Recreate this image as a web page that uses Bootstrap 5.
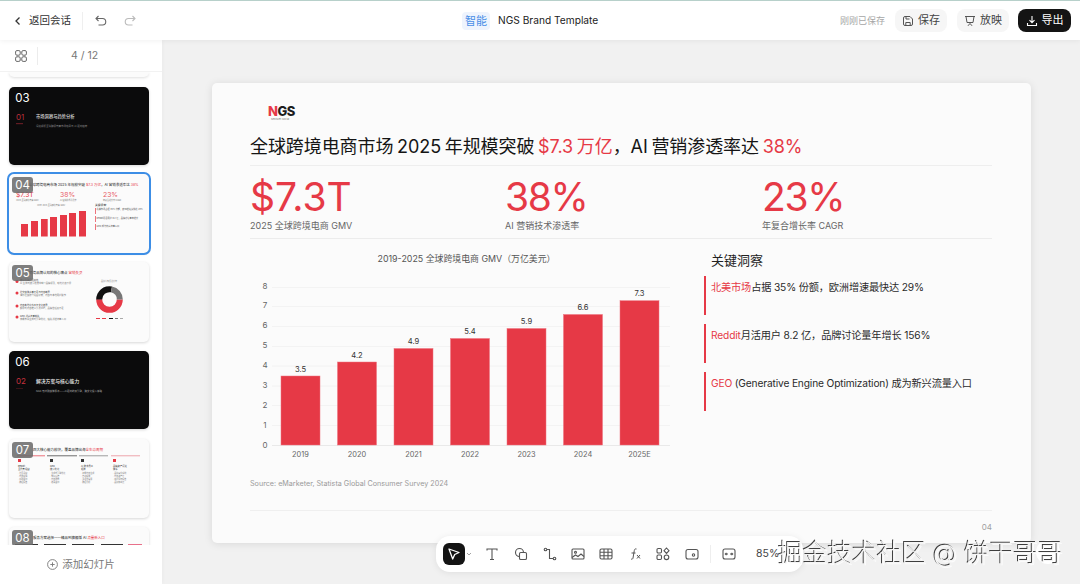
<!DOCTYPE html>
<html lang="zh-CN">
<head>
<meta charset="utf-8">
<title>NGS Brand Template</title>
<link href="https://cdn.jsdelivr.net/npm/bootstrap@5.3.0/dist/css/bootstrap.min.css" rel="stylesheet">
<style>
html,body{height:100%;margin:0}
body{font-family:Inter,"Noto Sans CJK SC",sans-serif;background:#f1f1f1;color:#1a1a1a;overflow:hidden;width:1080px;height:584px}
svg text{font-family:Inter,"Noto Sans CJK SC",sans-serif}
.shell{height:584px}
.topbar{height:40px;background:#fff;border-top:1px solid #b7d0ca;box-shadow:0 1px 5px rgba(0,0,0,.06);position:relative;z-index:3;padding-right:9px}
.top-left{width:462px;padding-left:14px}
.back-text{font-size:10.5px;color:#333;margin-left:7px}
.vsep{width:1px;height:18px;background:#efefef;margin:0 11px}
.undo-ic{margin-left:0}
.redo-ic{margin-left:15px}
.ai-tag{font-size:11px;color:#4a8fe7;background:#eef4fd;border-radius:4px;width:28px;height:18px;line-height:18px;text-align:center}
.doc-name{font-size:10.2px;color:#222;margin-left:8px}
.saved{font-size:9px;color:#a6a6a6;margin-right:10px}
.tbtn{width:52px;height:23px;border-radius:8px;background:#f6f6f6;color:#444;font-size:11px;border:0;padding:0;gap:4px}
.tbtn+.tbtn{margin-left:10px}
.tbtn-dark{background:#141414;color:#fff;width:53px;margin-left:9px!important}
.side{width:162px;background:#fff;box-shadow:1px 0 4px rgba(0,0,0,.03);position:relative;z-index:2;flex:none}
.side-head{height:32px;border-bottom:1px solid #f2f2f2;padding-left:15px}
.side-sep{width:1px;height:18px;background:#ececec;margin-left:10px}
.page-count{font-size:10.5px;color:#777;width:75px;text-align:center;margin-left:9px}
.thumbs{height:473px;overflow:hidden;padding:0 13px 0 9px}
.thumb-tail{height:5px;background:#fbfbfb;border-radius:0 0 5px 5px;box-shadow:0 1px 3px rgba(0,0,0,.13);margin-bottom:10px}
.thumb{position:relative;width:140px;background:#fbfbfb;border-radius:5px;box-shadow:0 1px 3px rgba(0,0,0,.16);margin-bottom:9px;overflow:hidden;flex:none}
.thumb svg{display:block;width:140px}
.thumb-dark{background:#0b0b0c}
.thumb-on{outline:2px solid #3d8ee6;outline-offset:0;overflow:visible;height:79px}
.thumb-num{position:absolute;left:3px;top:3px;width:21px;height:16px;border-radius:3px;background:rgba(105,105,105,.86);color:#fff;font-size:11.5px;line-height:16px;text-align:center}
.thumb-dark .thumb-num{background:transparent}
.gap-10{margin-bottom:10px}
.add-slide{height:39px;font-size:10.5px;color:#777;gap:4px}
.stage{position:relative;overflow:hidden;flex:1 1 0}
.slide{width:819px;height:460px;margin:43px auto 0;background:#fbfbfb;border-radius:5px;box-shadow:0 1px 8px rgba(0,0,0,.1);padding:0 39px 0 38px;position:relative;left:.5px}
.logo-box{height:47px;padding:21px 0 0 18px;line-height:1}
.logo-word{font-size:13px;font-weight:800;letter-spacing:-.5px;color:#1d1d1d;line-height:14px}
.logo-word b{color:#e63946;font-weight:800}
.logo-sub{font-size:2.5px;color:#777;line-height:4px;padding-left:3px}
.slide-title{font-size:18px;font-weight:400;line-height:24px;margin:0;height:36px;padding-top:5px;border-bottom:1px solid #eeeeee;color:#151515;letter-spacing:-.08px;word-spacing:-1.25px;white-space:nowrap}
.hl{color:#e63946}
.kpis{display:grid;grid-template-columns:255px 257px 1fr;height:73px;border-bottom:1px solid #ececec}
.kpi-num{font-size:39px;line-height:47px;color:#e63946;padding-top:7px;height:53px}
.kpi-tight{letter-spacing:-1.3px}
.kpi-label{font-size:9px;line-height:14px;color:#666}
.body-cols{height:220px}
.chart-col{width:454px;flex:none}
.chart-col svg{display:block;width:440px;height:220px}
.insight-head{font-size:13px;line-height:18px;padding:12px 0 0 7px;height:37px;color:#222}
.insight{border-left:2px solid #e63946;height:39px;margin-bottom:9px;padding:4px 0 0 5px;font-size:10.2px;letter-spacing:-.15px;line-height:15px;color:#2a2a2a;white-space:nowrap}
.src{font-size:7.2px;color:#9a9a9a;line-height:12px;height:12px;margin-top:19px}
.foot-line{border-top:1px solid #efefef;margin-top:51px;text-align:right;font-size:8px;color:#a0a0a0;padding-top:11px;line-height:10px}
.toolbar{position:absolute;left:274px;top:496px;width:367px;height:36px;background:#fff;border-radius:14px;box-shadow:0 1px 7px rgba(0,0,0,.08);z-index:4}
.tool{position:absolute;top:7px;width:22px;height:22px}
.tool svg{display:block;width:16px;height:16px;margin:3px}
.tool-on{background:#141414;border-radius:6px}
.t1{left:7px}.t2{left:45px}.t3{left:74px}.t4{left:103px}.t5{left:131px}.t6{left:159px}.t7{left:188px}.t8{left:216px}.t9{left:245px}.t10{left:282px}
.tool-caret{position:absolute;left:30px;top:16px}
.tool-sep{position:absolute;left:274px;top:9px;width:1px;height:18px;background:#eee}
.zoom-val{position:absolute;left:320px;top:0;line-height:36px;font-size:10.5px;color:#444}
.help-dot{position:absolute;left:874px;top:500px;width:24px;height:24px;border-radius:50%;background:#fff;z-index:4}
.wm{position:fixed;left:778px;top:535px;font-size:24.7px;line-height:36px;font-weight:300;color:#f5f5f5;text-shadow:-1px -1px 0 rgba(30,30,30,.85),1px 1px 0 rgba(255,255,255,.7);white-space:nowrap;z-index:9}
</style>
</head>
<body>
<div class="shell d-flex flex-column">
  <header class="topbar d-flex align-items-center">
    <div class="top-left d-flex align-items-center">
      <svg width="8" height="10" viewBox="0 0 8 10" fill="none" stroke="#333" stroke-width="1.3"><path d="M5.5 1.5 2 5l3.5 3.5"/></svg>
      <span class="back-text">返回会话</span>
      <span class="vsep"></span>
      <svg class="undo-ic" width="14" height="14" viewBox="0 0 14 14" fill="none" stroke="#666" stroke-width="1.1"><path d="M4.5 2 2 4.5 4.5 7M2 4.5h6.5a3 3 0 0 1 0 6.5H4.5"/></svg>
      <svg class="redo-ic" width="14" height="14" viewBox="0 0 14 14" fill="none" stroke="#bbb" stroke-width="1.1"><path d="M9.5 2 12 4.5 9.5 7M12 4.5H5.5a3 3 0 0 0 0 6.500h4"/></svg>
    </div>
    <span class="ai-tag">智能</span>
    <span class="doc-name">NGS Brand Template</span>
    <div class="ms-auto d-flex align-items-center">
      <span class="saved">刚刚已保存</span>
      <button class="tbtn btn d-flex align-items-center justify-content-center">
        <svg width="12" height="12" viewBox="0 0 12 12" fill="none" stroke="#555" stroke-width="1"><path d="M1.5 3A1.5 1.5 0 0 1 3 1.5h5L10.500 4v5A1.500 1.500 0 0 1 9 10.500H3A1.500 1.500 0 0 1 1.500 9zM4 1.500V4h3.500M3.800 10.500V7.500h4.400v3"/></svg>保存</button>
      <button class="tbtn btn d-flex align-items-center justify-content-center">
        <svg width="12" height="12" viewBox="0 0 12 12" fill="none" stroke="#555" stroke-width="1"><path d="M1 1.500h10M2 1.500 3 7.500h6l1-6M6 7.500v1.500M4 10.800 5.500 9M8 10.800 6.500 9"/></svg>放映</button>
      <button class="tbtn tbtn-dark btn d-flex align-items-center justify-content-center">
        <svg width="12" height="12" viewBox="0 0 12 12" fill="none" stroke="#fff" stroke-width="1.1"><path d="M6 1v6.500M3.500 5.200 6 7.700l2.500-2.500M1.500 8v2.500h9V8"/></svg>导出</button>
    </div>
  </header>
  <div class="d-flex flex-grow-1 overflow-hidden">
    <aside class="side d-flex flex-column">
      <div class="side-head d-flex align-items-center">
        <svg width="12" height="12" viewBox="0 0 12 12" fill="none" stroke="#666" stroke-width="1"><rect x=".6" y=".6" width="4.600" height="4.600" rx="1.300"/><rect x="6.800" y=".6" width="4.600" height="4.600" rx="1.300"/><rect x=".6" y="6.800" width="4.600" height="4.600" rx="1.300"/><rect x="6.800" y="6.800" width="4.600" height="4.600" rx="1.300"/></svg>
        <span class="side-sep"></span>
        <span class="page-count">4 / 12</span>
      </div>
      <div class="thumbs">
        <div class="thumb-tail"></div>
        <div class="thumb thumb-dark">
          <span class="thumb-num">03</span>
          <svg viewBox="0 0 140 78" height="78">
            <text x="7" y="33" font-size="8" fill="#b92f3b">01</text>
            <rect x="7" y="36.500" width="7" height=".6" fill="#b92f3b"/>
            <text x="27" y="31" font-size="4.300" font-weight="500" fill="#ddd">市场洞察与趋势分析</text>
            <text x="27" y="40" font-size="2.500" fill="#888">深度解析全球跨境电商市场格局与 AI 驱动趋势</text>
          </svg>
        </div>
        <div class="thumb thumb-on">
          <span class="thumb-num">04</span>
          <svg viewBox="0 0 140 79" height="79">
            <text x="20" y="12" font-size="3.500" fill="#222">全球跨境电商市场 2025 年规模突破 <tspan fill="#e63946">$7.3 万亿</tspan>，AI 营销渗透率达 <tspan fill="#e63946">38%</tspan></text>
            <text x="7" y="22.500" font-size="6.800" fill="#e63946">$7.3T</text><text x="51" y="22.500" font-size="6.800" fill="#e85d68">38%</text><text x="94" y="22.500" font-size="6.800" fill="#e85d68">23%</text>
            <text x="7" y="26.500" font-size="2" fill="#777">2025 全球跨境电商 GMV</text><text x="51" y="26.500" font-size="2" fill="#777">AI 营销技术渗透率</text><text x="94" y="26.500" font-size="2" fill="#777">年复合增长率 CAGR</text>
            <text x="28" y="31.500" font-size="2" fill="#777">2019-2025 全球跨境电商 GMV</text>
            <g fill="#e63946"><rect x="12" y="50" width="7" height="12.500"/><rect x="22" y="47" width="7" height="15.500"/><rect x="32" y="45" width="6.700" height="17.500"/><rect x="41" y="43" width="7" height="19.500"/><rect x="51" y="41" width="7" height="21.500"/><rect x="60" y="39" width="7" height="23.500"/><rect x="70" y="37" width="7" height="25.500"/></g>
            <text x="86" y="31.500" font-size="2.800" fill="#333">关键洞察</text>
            <rect x="86" y="34" width=".7" height="6" fill="#e63946"/><text x="87.500" y="36" font-size="2.200" fill="#555">北美市场占据 35% 份额，欧洲增速最快达 29%</text>
            <rect x="86" y="42" width=".7" height="6" fill="#e63946"/><text x="87.500" y="44.500" font-size="2.200" fill="#555">Reddit月活用户 8.2 亿，品牌讨论量年增长</text>
            <rect x="86" y="50" width=".7" height="6" fill="#e63946"/><text x="87.500" y="52.500" font-size="2.200" fill="#555">GEO 成为新兴流量入口</text>
          </svg>
        </div>
        <div class="thumb">
          <span class="thumb-num">05</span>
          <svg viewBox="0 0 140 80" height="80">
            <text x="20" y="12" font-size="3.500" fill="#222">跨境品牌认知的核心痛点 <tspan fill="#e63946">营销失灵</tspan></text>
            <g fill="#e63946"><circle cx="8" cy="19.500" r="1.500"/><circle cx="8" cy="31" r="1.500"/><circle cx="8" cy="44" r="1.500"/><circle cx="8" cy="55" r="1.500"/></g>
            <g font-size="2.300" fill="#444"><text x="11" y="19">搜索引擎可见度低</text><text x="11" y="22" fill="#777">AI 生成式搜索结果中缺少品牌提及，曝光持续下滑</text><text x="11" y="30.500">社交媒体声量不足与内容断层</text><text x="11" y="33.500" fill="#777">海外社媒账号运营分散，内容与本地用户脱节</text><text x="11" y="43.500">内容本地化水平与文化差异</text><text x="11" y="46.500" fill="#777">翻译式内容难以引发共鸣，品牌信任度不足</text><text x="11" y="54.500">GEO 新兴流量缺失</text><text x="11" y="57.500" fill="#777">未能布局生成式引擎优化，错失新增流量入口</text></g>
            <text x="92" y="19.500" font-size="2" fill="#888">品牌认知渠道分布</text>
            <circle cx="100.500" cy="37.500" r="10.300" fill="none" stroke="#e63946" stroke-width="6" stroke-dasharray="32.400 32.300"/>
            <path d="M87.200 37.500A13.300 13.300 0 0 1 103 24.400l-1.100 5.900a7.300 7.300 0 0 0-8.700 7.200z" fill="#111"/>
            <path d="M103 24.400A13.300 13.300 0 0 1 113.800 37.500h-6a7.300 7.300 0 0 0-5.900-7.200z" fill="#777"/>
            <g><rect x="87" y="56" width="4" height="1" fill="#e63946"/><rect x="93" y="56" width="4" height="1" fill="#e63946"/><rect x="100" y="56" width="4" height="1" fill="#111"/><rect x="106" y="56" width="3" height="1" fill="#777"/><rect x="111" y="56" width="3" height="1" fill="#aaa"/></g>
          </svg>
        </div>
        <div class="thumb thumb-dark gap-10">
          <span class="thumb-num">06</span>
          <svg viewBox="0 0 140 78" height="78">
            <text x="7" y="33" font-size="8" fill="#c8323e">02</text>
            <rect x="7" y="37" width="7" height=".6" fill="#5a1a20"/>
            <text x="27" y="32" font-size="4.800" font-weight="500" fill="#eee">解决方案与核心能力</text>
            <text x="27" y="41" font-size="2.500" fill="#aaa">NGS 无线融媒体服务——AI驱动的双引擎，跨文化投入策略</text>
          </svg>
        </div>
        <div class="thumb">
          <span class="thumb-num">07</span>
          <svg viewBox="0 0 140 79" height="79">
            <text x="24" y="12" font-size="3.500" fill="#222">四大核心能力模块，覆盖品牌出海<tspan fill="#e63946">全生命周期</tspan></text>
            <rect x="8" y="16.500" width="28" height=".7" fill="#e63946"/><rect x="38" y="16.500" width="30" height=".7" fill="#333"/><rect x="70" y="16.500" width="29" height=".7" fill="#777"/><rect x="102" y="16.500" width="29" height=".7" fill="#e8808a"/>
            <rect x="9" y="20" width="3" height="3" fill="#e63946"/><rect x="41" y="20" width="3" height="3" fill="#333"/><rect x="72" y="20" width="3" height="3" fill="#333"/><rect x="104" y="20" width="3" height="3" fill="#e63946"/>
            <g font-size="2.300" fill="#333"><text x="9" y="28">Reddit</text><text x="9" y="31">全托管运营</text><text x="41" y="28">GEO</text><text x="41" y="31">搜索优化</text><text x="72" y="28">AI 数字员工</text><text x="72" y="31">矩阵</text><text x="104" y="28">品牌资产沉淀</text><text x="104" y="31">体系</text></g>
            <g font-size="2" fill="#777"><text x="9" y="35">· 社区运营</text><text x="9" y="38">· 内容营销</text><text x="9" y="41">· 口碑监测</text><text x="9" y="44">· 数据报告</text><text x="41" y="35">· 生成式引擎优化</text><text x="41" y="38">· 知识图谱</text><text x="41" y="41">· 内容结构</text><text x="41" y="44">· 收录监测</text><text x="72" y="35">· 智能内容生成</text><text x="72" y="38">· 自动投放</text><text x="72" y="41">· 多语言客服</text><text x="72" y="44">· 数据分析</text><text x="104" y="35">· 品牌视觉系统</text><text x="104" y="38">· 内容资产库</text><text x="104" y="41">· 用户洞察报告</text><text x="104" y="44">· 品牌健康度</text></g>
          </svg>
        </div>
        <div class="thumb">
          <span class="thumb-num">08</span>
          <svg viewBox="0 0 140 80" height="80">
            <text x="24" y="12" font-size="3.500" fill="#222">服务方案选择——精品到旗舰版 AI <tspan fill="#e63946">流量新入口</tspan></text>
            <rect x="6" y="17" width="23" height="8" fill="#333"/><rect x="35" y="17" width="22" height="8" fill="#333"/><rect x="63" y="17" width="22" height="8" fill="#333"/><rect x="92" y="17" width="22" height="8" fill="#333"/><rect x="119" y="17" width="14" height="8" fill="#e8708a"/>
          </svg>
        </div>
      </div>
      <div class="add-slide d-flex align-items-center justify-content-center">
        <svg width="11" height="11" viewBox="0 0 11 11" fill="none" stroke="#777" stroke-width=".9"><circle cx="5.500" cy="5.500" r="4.900"/><path d="M5.500 3.300v4.400M3.300 5.500h4.400"/></svg>
        <span>添加幻灯片</span>
      </div>
    </aside>
    <main class="stage">
      <section class="slide">
        <div class="logo-box">
          <div class="logo-word"><b>N</b>GS</div>
          <div class="logo-sub">NextGen Social</div>
        </div>
        <h1 class="slide-title">全球跨境电商市场 2025 年规模突破 <span class="hl">$7.3 万亿</span>，AI 营销渗透率达 <span class="hl">38%</span></h1>
        <div class="kpis">
          <div><div class="kpi-num">$7.3T</div><div class="kpi-label">2025 全球跨境电商 GMV</div></div>
          <div><div class="kpi-num kpi-tight">38%</div><div class="kpi-label">AI 营销技术渗透率</div></div>
          <div><div class="kpi-num kpi-tight">23%</div><div class="kpi-label">年复合增长率 CAGR</div></div>
        </div>
        <div class="body-cols d-flex">
          <div class="chart-col">
            <svg viewBox="250 239 440 220">
              <text x="466.500" y="262" font-size="8.900" fill="#555" text-anchor="middle">2019-2025 全球跨境电商 GMV（万亿美元）</text>
              <g stroke="#f1f1f1" stroke-width=".8"><path d="M272 287.500H670M272 306.500H670M272 326.500H670M272 346.500H670M272 366H670M272 386H670M272 405.500H670M272 425.500H670"/><path d="M272 445.500H670" stroke="#e4e4e4"/></g>
              <g font-size="8" fill="#666" text-anchor="middle"><text x="265" y="288.500">8</text><text x="265" y="308">7</text><text x="265" y="328">6</text><text x="265" y="348">5</text><text x="265" y="368">4</text><text x="265" y="388">3</text><text x="265" y="408">2</text><text x="265" y="428">1</text><text x="265" y="448">0</text></g>
              <g fill="#e63946" stroke="#ee7580" stroke-width=".5"><rect x="281" y="376" width="39" height="69"/><rect x="337.500" y="362" width="39" height="83"/><rect x="394" y="348.500" width="39" height="96.500"/><rect x="450.500" y="338.500" width="39" height="106.500"/><rect x="507" y="328.500" width="39" height="116.500"/><rect x="563.500" y="314.500" width="39" height="130.500"/><rect x="620" y="300.700" width="39" height="144.300"/></g>
              <g font-size="7.600" fill="#333" text-anchor="middle"><text x="300.500" y="371.500">3.5</text><text x="357" y="357.500">4.2</text><text x="413.500" y="343.500">4.9</text><text x="470" y="333.500">5.4</text><text x="526.500" y="323.500">5.9</text><text x="583" y="309.500">6.6</text><text x="639.500" y="296">7.3</text></g>
              <g font-size="7.400" fill="#666" text-anchor="middle"><text x="300.500" y="457">2019</text><text x="357" y="457">2020</text><text x="413.500" y="457">2021</text><text x="470" y="457">2022</text><text x="526.500" y="457">2023</text><text x="583" y="457">2024</text><text x="639.500" y="457">2025E</text></g>
            </svg>
            <div class="src">Source: eMarketer, Statista Global Consumer Survey 2024</div>
          </div>
          <div class="flex-grow-1">
            <div class="insight-head">关键洞察</div>
            <div class="insight"><span class="hl">北美市场</span>占据 35% 份额，欧洲增速最快达 29%</div>
            <div class="insight"><span class="hl">Reddit</span>月活用户 8.2 亿，品牌讨论量年增长 156%</div>
            <div class="insight"><span class="hl">GEO</span> (Generative Engine Optimization) 成为新兴流量入口</div>
          </div>
        </div>
        <div class="foot-line">04</div>
      </section>
      <div class="toolbar">
        <div class="tool tool-on t1"><svg viewBox="0 0 16 16" fill="none" stroke="#fff" stroke-width="1.300" stroke-linejoin="round"><path d="M3 3l10 3.500-4.300 2-2 4.500z"/></svg></div>
        <svg class="tool-caret" width="6" height="4" viewBox="0 0 6 4" fill="none" stroke="#999" stroke-width=".9"><path d="M1 1l2 2 2-2"/></svg>
        <div class="tool t2"><svg viewBox="0 0 16 16" fill="none" stroke="#555" stroke-width="1.100"><path d="M3 4.500V3h10v1.500M8 3v10.500M6 13.500h4"/></svg></div>
        <div class="tool t3"><svg viewBox="0 0 16 16" fill="none" stroke="#555" stroke-width="1.100"><circle cx="6.500" cy="6.500" r="4"/><rect x="6.500" y="6.500" width="7" height="7" rx="1.300" fill="#fff"/></svg></div>
        <div class="tool t4"><svg viewBox="0 0 16 16" fill="none" stroke="#555" stroke-width="1.100"><circle cx="3.500" cy="3.500" r="1.300"/><circle cx="12.500" cy="12.500" r="1.300"/><path d="M5 3.500h2.500v9H11"/></svg></div>
        <div class="tool t5"><svg viewBox="0 0 16 16" fill="none" stroke="#555" stroke-width="1.100"><rect x="2" y="3" width="12" height="10" rx="1"/><circle cx="5.500" cy="6.300" r="1"/><path d="M2 11.500l3.500-2.500 2.500 1.500 3-2.500 3 2.500"/></svg></div>
        <div class="tool t6"><svg viewBox="0 0 16 16" fill="none" stroke="#555" stroke-width="1.100"><rect x="2" y="3" width="12" height="10" rx="1.500"/><path d="M2 6.300h12M2 9.700h12M6 3v10M10 3v10"/></svg></div>
        <div class="tool t7"><svg viewBox="0 0 16 16" fill="none" stroke="#555" stroke-width="1"><path d="M9.500 3c-1.500-.5-2 .5-2.200 1.500L6 12c-.2 1-.8 1.500-2 1M4.500 7h4M10 9l3 3.500M13 9l-3 3.500"/></svg></div>
        <div class="tool t8"><svg viewBox="0 0 16 16" fill="none" stroke="#555" stroke-width="1.100"><rect x="2" y="2.500" width="4.500" height="4.500" rx="1.200"/><path d="M11.500 2l2.500 2.700-2.500 2.700L9 4.700z"/><rect x="2" y="9" width="4.500" height="4.500" rx="1.200"/><circle cx="11.500" cy="11.300" r="2.300"/></svg></div>
        <div class="tool t9"><svg viewBox="0 0 16 16" fill="none" stroke="#555" stroke-width="1.100"><rect x="2" y="3.500" width="12" height="9.500" rx="2"/><circle cx="9.500" cy="9" r="1.200"/></svg></div>
        <span class="tool-sep"></span>
        <div class="tool t10"><svg viewBox="0 0 16 16" fill="none" stroke="#555" stroke-width="1.100"><rect x="2" y="3" width="12" height="10" rx="2"/><path d="M7 8H4.500m1-1.200L4.300 8l1.200 1.200M9 8h2.500m-1-1.200L11.700 8l-1.200 1.200"/></svg></div>
        <span class="zoom-val">85%</span>
      </div>
      <div class="help-dot"></div>
    </main>
  </div>
</div>
<div class="wm">掘金技术社区 @ 饼干哥哥</div>
</body>
</html>
